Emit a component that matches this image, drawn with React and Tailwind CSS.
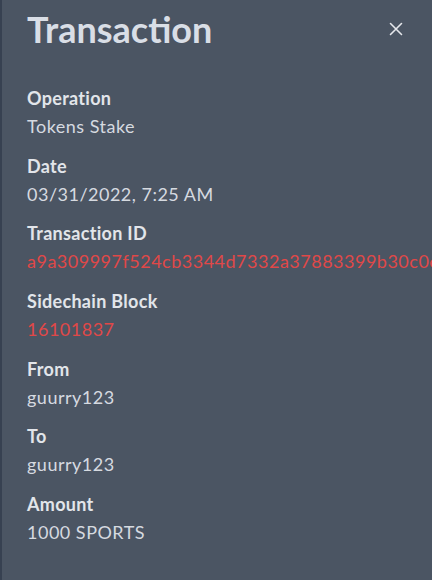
import React from 'react'

const rows = [
  { label: 'Operation', value: 'Tokens Stake' },
  { label: 'Date', value: '03/31/2022, 7:25 AM' },
  { label: 'Transaction ID', value: 'a9a309997f524cb3344d7332a37883399b30c0e5f1d2', link: true },
  { label: 'Sidechain Block', value: '16101837', link: true },
  { label: 'From', value: 'guurry123' },
  { label: 'To', value: 'guurry123' },
  { label: 'Amount', value: '1000 SPORTS' },
]

const App = () => {
  return (
    <div
      className="h-[580px] w-[432px] overflow-hidden bg-[#4b5563] border-l-2 border-[#374151] pl-[25px] pr-[29px] pt-[9px]"
      style={{ fontFamily: 'Lato, "Open Sans", sans-serif' }}
    >
      {/* Header */}
      <div className="flex items-center justify-between h-[40px]">
        <h1 className="text-[36px] leading-[40px] font-bold text-[#d9dee6]">Transaction</h1>
        <button className="text-[#e5e7eb] w-[14px] h-[14px] flex items-center justify-center">
          <svg width="14" height="14" viewBox="0 0 14 14" fill="none" stroke="currentColor" strokeWidth="1.6" strokeLinecap="round">
            <path d="M1.5 1.5 L12.5 12.5 M12.5 1.5 L1.5 12.5" />
          </svg>
        </button>
      </div>

      {/* Details */}
      <div className="flex flex-col gap-[11.7px] mt-[35px]">
        {rows.map((r) => (
          <div key={r.label} className="flex flex-col">
            <div className="text-[18px] leading-[28px] font-bold tracking-[0.3px] text-[#e2e5ea]">{r.label}</div>
            <div
              className={
                r.link
                  ? 'text-[18px] leading-[28px] tracking-[0.5px] whitespace-nowrap text-[#e04848] mr-[-40px]'
                  : 'text-[18px] leading-[28px] tracking-[0.5px] whitespace-nowrap text-[#d6dae0]'
              }
            >
              {r.value}
            </div>
          </div>
        ))}
      </div>
    </div>
  )
}

export default App
